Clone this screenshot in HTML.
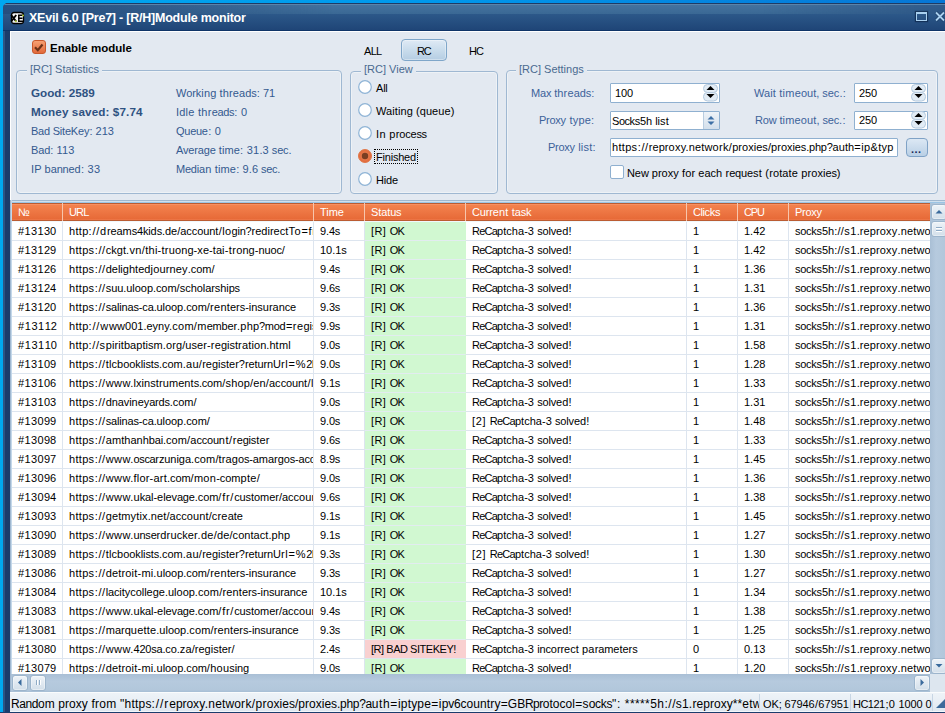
<!DOCTYPE html>
<html><head><meta charset="utf-8">
<style>
*{margin:0;padding:0;box-sizing:border-box}
html,body{width:945px;height:713px;overflow:hidden;background:linear-gradient(90deg,#00a8f0 0,#0098ec 45%,#0676d6 100%);font-family:"Liberation Sans",sans-serif;font-size:11px;color:#000}
.abs{position:absolute}
.t b,.c b,.h b,.inp b{font-weight:inherit}
#win{position:absolute;left:3px;top:3px;width:960px;height:720px;background:#1c3c6c;border-radius:5px 5px 0 0;overflow:hidden}
#titlebar{position:absolute;left:0;top:0;width:100%;height:28px;background:linear-gradient(#1e3c66 0,#1e3c66 1px,#5a84ab 1px,#5a84ab 2px,#44729e 2px,#3a6894 11px,#2c5889 11px,#1f4577 27px,#0f3468 27px)}
#lframe{position:absolute;left:0;top:28px;width:7px;height:700px;background:linear-gradient(90deg,#2c5484 0,#2c5484 2px,#1b3b6b 2px)}
#title{position:absolute;left:26px;top:7.5px;font-weight:bold;font-size:12.5px;letter-spacing:-0.22px;color:#fff;white-space:nowrap}
#content{position:absolute;left:10px;top:31px;width:940px;height:690px;background:#e3e9f1;border-left:1px solid #fff;border-top:1px solid #fff}
.grp{position:absolute;border:1px solid #9fb8d2;border-radius:4px;box-shadow:inset 0 0 0 1px rgba(255,255,255,.4)}
.legend{position:absolute;background:#e3e9f1;color:#4a6a90;padding:0 3px;white-space:nowrap;font-size:11px;line-height:13px}
.t{position:absolute;white-space:nowrap;line-height:13px}
.stat{color:#34598f}
.statb{color:#2f5282;font-weight:bold;font-size:11.7px}
.lbl{color:#3c629a}
.inp{position:absolute;background:#fff;border:1px solid #8fb0d0;border-radius:1px;overflow:hidden}
.inp span{position:absolute;left:4px;top:3px;white-space:nowrap;line-height:13px;color:#000}
#table{position:absolute;left:10px;top:200px;width:935px;height:492px;background:linear-gradient(#a0b8d0 0,#a0b8d0 1px,#d0e0ee 1px,#d0e0ee 2px,#9cc4e4 2px,#9cc4e4 3px,#f0f8fc 3px);border-left:1px solid #a0b8d0;box-shadow:inset 1px 0 0 #c4d8ea;overflow:hidden}
.h{position:absolute;top:203px;height:18px;background:linear-gradient(#bb5c32 0,#bb5c32 1px,#f99062 1px,#f99062 2px,#f3824e 2px,#e76a38 16px,#ec7444 16px,#ec7444 17px,#bb5c32 17px);border-right:1px solid #f7c6ad;color:#fff;overflow:hidden}
.h span{position:absolute;left:6px;top:3px;white-space:nowrap;line-height:13px}
.row{position:absolute;left:0;width:945px;height:19px}
.c{position:absolute;top:0;height:19px;border-right:1px solid #dde5ef;border-bottom:1px solid #dde5ef;overflow:hidden;background:#fff}
.c span{position:absolute;left:6px;top:3px;white-space:nowrap;line-height:13px}
.c.ok{background:#d1f8d1;border-bottom-color:#e2ecf0;border-right-color:#d1f8d1}
.c.bad{background:#f9d0d0;border-right-color:#f9d0d0}
.sbtn{position:absolute;border:1px solid #9db5cc;border-radius:3px;background:linear-gradient(#eef3f8,#d3dfea);box-shadow:inset 0 0 0 1px rgba(255,255,255,.4)}
</style></head><body>
<div id="win">
  <div id="titlebar"></div><div style="position:absolute;left:0;top:0;width:100%;height:28px;background:linear-gradient(90deg,rgba(31,69,119,.75) 0,rgba(31,69,119,.55) 120px,rgba(31,69,119,0) 330px,rgba(31,69,119,0) 760px,rgba(31,69,119,.5) 942px);-webkit-mask:linear-gradient(#000 0,#000 11px,transparent 11px);mask:linear-gradient(transparent 0,transparent 2px,#000 2px,#000 11px,transparent 11px)"></div>
  <div id="lframe"></div>
  <div id="title">XEvil 6.0 [Pre7] - [R/H]Module monitor</div>
</div>
<svg class="abs" style="left:10px;top:11px" width="15" height="14"><rect x="1.5" y="1.5" width="12" height="11" rx="2.5" fill="#f4f4f4" stroke="#000" stroke-width="1.3"></rect><path d="M1.2 4 L6.2 10.5 M6.2 4 L1.2 10.5" stroke="#000" stroke-width="1.9"></path><path d="M8 4.2 H13 M8 7.3 H12.5 M8 10.3 H13 M8.8 4.2 V10.3" stroke="#000" stroke-width="1.5"></path><circle cx="5.8" cy="10.2" r="0.9" fill="#bcdc3c"></circle><circle cx="13" cy="4.5" r="0.9" fill="#bcdc3c"></circle></svg>
<div class="abs" style="left:916px;top:12px;width:11px;height:9px;border:1px solid #a9d0ef;border-top-width:2px;box-shadow:0 0 1px 1px rgba(0,20,50,.5)"></div>
<svg class="abs" style="left:933px;top:10px" width="14" height="13"><path d="M3 2.5 L11 10.5 M11 2.5 L3 10.5" stroke="#0a2244" stroke-width="3.2" opacity=".5"></path><path d="M3 2.5 L11 10.5 M11 2.5 L3 10.5" stroke="#a9d0ef" stroke-width="1.8"></path></svg>

<div id="content"></div>

<!-- Enable module -->
<div class="abs" style="left:32px;top:40px;width:14px;height:14px;border-radius:3px;background:linear-gradient(#f7a173,#e2693a);border:1px solid #c9592c"></div>
<svg class="abs" style="left:32px;top:40px" width="14" height="14"><path d="M3 7.2 L5.8 10.2 L10.5 4.5" stroke="#6b3218" stroke-width="2.2" fill="none"></path></svg>
<div class="t" style="left:50px;top:42px;font-weight:bold;font-size:11.5px">Enable module</div>

<!-- Statistics group -->
<div class="grp" style="left:16px;top:70px;width:326px;height:124px"></div>
<div class="legend" style="left:27px;top:63px">[RC] Statistics</div>
<div class="t statb" style="left:31px;top:86px">Good: 2589</div>
<div class="t statb" style="left:31px;top:105px;letter-spacing:0.1px">Money saved: $7.74</div>
<div class="t stat" style="left:31px;top:125px"><b style="letter-spacing: -0.22px;">Bad </b><b style="letter-spacing: -0.22px;">Site</b><b style="letter-spacing: -0.1px;">Key:</b><b style="letter-spacing: 0.01px;"> 213</b></div>
<div class="t stat" style="left:31px;top:144px"><b style="letter-spacing: -0.1px;">Bad:</b><b style="letter-spacing: 0.22px;"> 113</b></div>
<div class="t stat" style="left:31px;top:163px"><b style="letter-spacing: 0.08px;">IP b</b><b style="letter-spacing: -0.16px;">anne</b><b style="letter-spacing: 0.27px;">d: 3</b><b style="letter-spacing: -0.12px;">3</b></div>
<div class="t stat" style="left:176px;top:87px"><b style="letter-spacing: -0.03px;">Work</b><b style="letter-spacing: 0.11px;">ing </b><b style="letter-spacing: 0.15px;">thre</b><b style="letter-spacing: -0.03px;">ads:</b><b style="letter-spacing: 0.05px;"> 71</b></div>
<div class="t stat" style="left:176px;top:106px"><b style="letter-spacing: 0.19px;">Idle</b><b style="letter-spacing: 0.33px;"> thr</b><b style="letter-spacing: -0.33px;">eads</b><b style="letter-spacing: 0.37px;">: 0</b></div>
<div class="t stat" style="left:176px;top:125px"><b style="letter-spacing: -0.27px;">Queu</b><b style="letter-spacing: 0.19px;">e: 0</b></div>
<div class="t stat" style="left:176px;top:144px"><b style="letter-spacing: -0.16px;">Aver</b><b style="letter-spacing: -0.09px;">age </b><b style="letter-spacing: 0.11px;">time</b><b style="letter-spacing: 0.25px;">: 31</b><b style="letter-spacing: -0.01px;">.3 s</b><b style="letter-spacing: -0.17px;">ec.</b></div>
<div class="t stat" style="left:176px;top:163px"><b style="letter-spacing: -0.24px;">Medi</b><b style="letter-spacing: 0.17px;">an t</b><b style="letter-spacing: 0.16px;">ime:</b><b style="letter-spacing: 0.11px;"> 9.6</b><b style="letter-spacing: -0.25px;"> sec</b><b style="letter-spacing: 0.27px;">.</b></div>

<!-- Tabs -->
<div class="t" style="left:364px;top:45px"><b style="letter-spacing: -0.69px;">ALL</b></div>
<div class="abs" style="left:401px;top:39px;width:46px;height:22px;border:1px solid #7fa6c9;border-radius:4px;background:linear-gradient(#dfeaf5,#c9dcec 50%,#b5cde3);box-shadow:inset 0 0 0 1px rgba(255,255,255,.35)"></div>
<div class="t" style="left:417px;top:45px"><b style="letter-spacing: -1.22px;">RC</b></div>
<div class="t" style="left:469px;top:45px"><b style="letter-spacing: -0.93px;">HC</b></div>

<!-- View group -->
<div class="grp" style="left:350px;top:71px;width:148px;height:123px"></div>
<div class="legend" style="left:361px;top:63px">[RC] View</div>
<svg class="abs" style="left:358px;top:80px" width="14" height="14"><circle cx="7" cy="7" r="6.3" fill="#fff" stroke="#8fb4d6" stroke-width="1.2"></circle></svg><div class="t" style="left:376px;top:82px"><b style="letter-spacing: -0.21px;">All</b></div><svg class="abs" style="left:358px;top:103px" width="14" height="14"><circle cx="7" cy="7" r="6.3" fill="#fff" stroke="#8fb4d6" stroke-width="1.2"></circle></svg><div class="t" style="left:376px;top:105px"><b style="letter-spacing: 0.07px;">Wait</b><b style="letter-spacing: 0.11px;">ing </b><b style="letter-spacing: 0.05px;">(que</b><b style="letter-spacing: 0.08px;">ue)</b></div><svg class="abs" style="left:358px;top:126px" width="14" height="14"><circle cx="7" cy="7" r="6.3" fill="#fff" stroke="#8fb4d6" stroke-width="1.2"></circle></svg><div class="t" style="left:376px;top:128px"><b style="letter-spacing: 0.35px;">In p</b><b style="letter-spacing: -0.15px;">roce</b><b style="letter-spacing: -0.59px;">ss</b></div><svg class="abs" style="left:358px;top:149px" width="14" height="14"><defs><radialGradient id="rg"><stop offset="0" stop-color="#f08a60"></stop><stop offset="1" stop-color="#e06838"></stop></radialGradient></defs><circle cx="7" cy="7" r="6.5" fill="url(#rg)" stroke="#e0784a"></circle><circle cx="7" cy="7" r="3.2" fill="#7a3e22"></circle></svg><div class="abs" style="left:374px;top:149px;width:44px;height:15px;border:1px dotted #000"></div><div class="t" style="left:376px;top:151px"><b style="letter-spacing: -0.21px;">Fini</b><b style="letter-spacing: -0.24px;">shed</b></div><svg class="abs" style="left:358px;top:172px" width="14" height="14"><circle cx="7" cy="7" r="6.3" fill="#fff" stroke="#8fb4d6" stroke-width="1.2"></circle></svg><div class="t" style="left:376px;top:174px"><b style="letter-spacing: -0.2px;">Hide</b></div>

<!-- Settings group -->
<div class="grp" style="left:506px;top:70px;width:432px;height:124px"></div>
<div class="legend" style="left:516px;top:63px">[RC] Settings</div>
<div class="t lbl" style="left:531px;top:87px"><b style="letter-spacing: -0.18px;">Max </b><b style="letter-spacing: 0.15px;">thre</b><b style="letter-spacing: -0.03px;">ads:</b></div>
<div class="t lbl" style="left:539px;top:114px"><b style="letter-spacing: -0.3px;">Prox</b><b style="letter-spacing: 0.24px;">y ty</b><b style="letter-spacing: 0.16px;">pe:</b></div>
<div class="t lbl" style="left:548px;top:141px"><b style="letter-spacing: -0.3px;">Prox</b><b style="letter-spacing: 0.13px;">y li</b><b style="letter-spacing: 0.28px;">st:</b></div>
<div class="t lbl" style="left:754px;top:87px"><b style="letter-spacing: 0.07px;">Wait</b><b style="letter-spacing: 0.28px;"> tim</b><b style="letter-spacing: 0.04px;">eout</b><b style="letter-spacing: -0.07px;">, se</b><b style="letter-spacing: 0.22px;">c.:</b></div>
<div class="t lbl" style="left:755px;top:114px"><b style="letter-spacing: -0.16px;">Row </b><b style="letter-spacing: 0.11px;">time</b><b style="letter-spacing: 0.19px;">out,</b><b style="letter-spacing: -0.25px;"> sec</b><b style="letter-spacing: 0.55px;">.:</b></div>
<div class="inp" style="left:610px;top:83px;width:110px;height:20px"><span><b style="letter-spacing: -0.11px;">100</b></span></div>
<div class="inp" style="left:610px;top:111px;width:110px;height:19px"><span style="left:1px"><b style="letter-spacing: -0.45px;">Sock</b><b style="letter-spacing: -0.08px;">s5h </b><b style="letter-spacing: 0.04px;">list</b></span></div>
<div class="inp" style="left:610px;top:138px;width:288px;height:19px"><span style="left:1px;top:2px"><b style="letter-spacing: 0.3px;">http</b><b style="letter-spacing: 0.63px;">s://</b><b style="letter-spacing: 0.06px;">repr</b><b style="letter-spacing: 0.22px;">oxy.</b><b style="letter-spacing: 0.13px;">netw</b><b style="letter-spacing: 0.32px;">ork/</b><b style="letter-spacing: 0.01px;">prox</b><b style="letter-spacing: 0.07px;">ies/</b><b style="letter-spacing: 0.01px;">prox</b><b style="letter-spacing: -0.15px;">ies.</b><b style="letter-spacing: -0.24px;">php?</b><b style="letter-spacing: 0.08px;">auth</b><b style="letter-spacing: 0.42px;">=ip&amp;</b><b style="letter-spacing: 0.18px;">typ</b></span></div>
<div class="inp" style="left:854px;top:83px;width:74px;height:20px"><span><b style="letter-spacing: -0.11px;">250</b></span></div>
<div class="inp" style="left:854px;top:111px;width:74px;height:19px"><span style="top:2px"><b style="letter-spacing: -0.11px;">250</b></span></div>

<svg class="abs" style="left:703px;top:84px" width="16" height="18"><rect x="0.5" y="0.5" width="14" height="8" rx="4" fill="#e2ecf5" stroke="#b5cade"></rect><rect x="0.5" y="8.5" width="14" height="8.5" rx="4" fill="#e2ecf5" stroke="#b5cade"></rect><path d="M3.5 6 L7.5 2 L11.5 6 Z M3.5 10 L7.5 14 L11.5 10 Z" fill="#000"></path></svg>
<svg class="abs" style="left:911px;top:84px" width="16" height="18"><rect x="0.5" y="0.5" width="14" height="8" rx="4" fill="#e2ecf5" stroke="#b5cade"></rect><rect x="0.5" y="8.5" width="14" height="8.5" rx="4" fill="#e2ecf5" stroke="#b5cade"></rect><path d="M3.5 6 L7.5 2 L11.5 6 Z M3.5 10 L7.5 14 L11.5 10 Z" fill="#000"></path></svg>
<svg class="abs" style="left:911px;top:111px" width="16" height="18"><rect x="0.5" y="0.5" width="14" height="8" rx="4" fill="#e2ecf5" stroke="#b5cade"></rect><rect x="0.5" y="8.5" width="14" height="8.5" rx="4" fill="#e2ecf5" stroke="#b5cade"></rect><path d="M3.5 6 L7.5 2 L11.5 6 Z M3.5 10 L7.5 14 L11.5 10 Z" fill="#000"></path></svg>
<div class="abs" style="left:703px;top:112px;width:16px;height:17px;background:linear-gradient(#eef3f8,#d3dfeb);border-left:1px solid #b9cde0"></div>
<svg class="abs" style="left:703px;top:112px" width="16" height="17"><path d="M4.5 7.5 L8 4 L11.5 7.5 Z M4.5 9.5 L8 13 L11.5 9.5 Z" fill="#3d6fa5"></path></svg>
<div class="abs" style="left:906px;top:138px;width:22px;height:19px;border:1px solid #7fa2c6;border-radius:4px;background:linear-gradient(#dce8f4,#b9cfe5)"></div>
<div class="t" style="left:911px;top:143px;font-weight:bold;color:#1a2a5a;letter-spacing:0.5px">...</div>
<div class="abs" style="left:610px;top:165px;width:14px;height:14px;border:1px solid #8fb0d0;border-radius:2px;background:#fff"></div>
<div class="t" style="left:627px;top:167px"><b style="letter-spacing: -0.08px;">New </b><b style="letter-spacing: 0.01px;">prox</b><b style="letter-spacing: 0.16px;">y fo</b><b style="letter-spacing: 0px;">r ea</b><b style="letter-spacing: 0.07px;">ch r</b><b style="letter-spacing: -0.17px;">eque</b><b style="letter-spacing: 0.24px;">st (</b><b style="letter-spacing: 0.1px;">rota</b><b style="letter-spacing: 0.16px;">te p</b><b style="letter-spacing: 0.04px;">roxi</b><b style="letter-spacing: -0.13px;">es)</b></div>

<!-- Table -->
<div id="table"></div>
<div class="h" style="left:12px;width:51px"><span><b style="letter-spacing: -5.76px;">№</b></span></div><div class="h" style="left:63px;width:251px"><span><b style="letter-spacing: -0.83px;">URL</b></span></div><div class="h" style="left:314px;width:51px"><span><b style="letter-spacing: -0.02px;">Time</b></span></div><div class="h" style="left:365px;width:101px"><span><b style="letter-spacing: -0.08px;">Stat</b><b style="letter-spacing: -0.29px;">us</b></span></div><div class="h" style="left:466px;width:221px"><span><b style="letter-spacing: -0.18px;">Curr</b><b style="letter-spacing: 0.17px;">ent </b><b style="letter-spacing: -0.09px;">task</b></span></div><div class="h" style="left:687px;width:51px"><span><b style="letter-spacing: -0.41px;">Clic</b><b style="letter-spacing: -0.31px;">ks</b></span></div><div class="h" style="left:738px;width:51px"><span><b style="letter-spacing: -1.12px;">CPU</b></span></div><div class="h" style="left:789px;width:142px"><span><b style="letter-spacing: -0.3px;">Prox</b><b style="letter-spacing: -0.02px;">y</b></span></div>
<div class="row" style="top:222px"><div class="c" style="left:12px;width:51px"><span><b style="letter-spacing: 0.39px;">#131</b><b style="letter-spacing: -0.12px;">30</b></span></div><div class="c" style="left:63px;width:251px"><span><b style="letter-spacing: 0.3px;">http</b><b style="letter-spacing: 0.77px;">://d</b><b style="letter-spacing: -0.08px;">ream</b><b style="letter-spacing: -0.16px;">s4ki</b><b style="letter-spacing: -0.1px;">ds.d</b><b style="letter-spacing: 0.01px;">e/ac</b><b style="letter-spacing: -0.13px;">coun</b><b style="letter-spacing: 0.42px;">t/lo</b><b style="letter-spacing: -0.21px;">gin?</b><b style="letter-spacing: 0px;">redi</b><b style="letter-spacing: 0.04px;">rect</b><b style="letter-spacing: 0.7px;">To=f</b><b style="letter-spacing: 0.07px;">rom</b></span></div><div class="c" style="left:314px;width:51px"><span><b style="letter-spacing: -0.14px;">9.4s</b></span></div><div class="c ok" style="left:365px;width:101px"><span><b style="letter-spacing: 0.39px;">[R] </b><b style="letter-spacing: -0.83px;">OK</b></span></div><div class="c" style="left:466px;width:221px"><span><b style="letter-spacing: -0.78px;">ReCa</b><b style="letter-spacing: 0.04px;">ptch</b><b style="letter-spacing: 0.06px;">a-3 </b><b style="letter-spacing: -0.17px;">solv</b><b style="letter-spacing: 0.07px;">ed!</b></span></div><div class="c" style="left:687px;width:51px"><span><b style="letter-spacing: -0.12px;">1</b></span></div><div class="c" style="left:738px;width:51px"><span><b style="letter-spacing: -0.02px;">1.42</b></span></div><div class="c" style="left:789px;width:142px"><span><b style="letter-spacing: -0.3px;">sock</b><b style="letter-spacing: 0.04px;">s5h:</b><b style="letter-spacing: 0.4px;">//s1</b><b style="letter-spacing: 0.05px;">.rep</b><b style="letter-spacing: 0.22px;">roxy</b><b style="letter-spacing: 0.14px;">.net</b><b style="letter-spacing: 0.08px;">work</b><b style="letter-spacing: 0.12px;">:100</b><b style="letter-spacing: -0.12px;">00</b></span></div></div>
<div class="row" style="top:241px"><div class="c" style="left:12px;width:51px"><span><b style="letter-spacing: 0.39px;">#131</b><b style="letter-spacing: -0.12px;">29</b></span></div><div class="c" style="left:63px;width:251px"><span><b style="letter-spacing: 0.3px;">http</b><b style="letter-spacing: 0.63px;">s://</b><b style="letter-spacing: 0.03px;">ckgt</b><b style="letter-spacing: 0.35px;">.vn/</b><b style="letter-spacing: 0.26px;">thi-</b><b style="letter-spacing: 0.19px;">truo</b><b style="letter-spacing: 0.06px;">ng-x</b><b style="letter-spacing: 0.06px;">e-ta</b><b style="letter-spacing: 0.33px;">i-tr</b><b style="letter-spacing: 0.04px;">ong-</b><b style="letter-spacing: -0.13px;">nuoc</b><b style="letter-spacing: 1.14px;">/</b></span></div><div class="c" style="left:314px;width:51px"><span><b style="letter-spacing: -0.02px;">10.1</b><b style="letter-spacing: -0.59px;">s</b></span></div><div class="c ok" style="left:365px;width:101px"><span><b style="letter-spacing: 0.39px;">[R] </b><b style="letter-spacing: -0.83px;">OK</b></span></div><div class="c" style="left:466px;width:221px"><span><b style="letter-spacing: -0.78px;">ReCa</b><b style="letter-spacing: 0.04px;">ptch</b><b style="letter-spacing: 0.06px;">a-3 </b><b style="letter-spacing: -0.17px;">solv</b><b style="letter-spacing: 0.07px;">ed!</b></span></div><div class="c" style="left:687px;width:51px"><span><b style="letter-spacing: -0.12px;">1</b></span></div><div class="c" style="left:738px;width:51px"><span><b style="letter-spacing: -0.02px;">1.42</b></span></div><div class="c" style="left:789px;width:142px"><span><b style="letter-spacing: -0.3px;">sock</b><b style="letter-spacing: 0.04px;">s5h:</b><b style="letter-spacing: 0.4px;">//s1</b><b style="letter-spacing: 0.05px;">.rep</b><b style="letter-spacing: 0.22px;">roxy</b><b style="letter-spacing: 0.14px;">.net</b><b style="letter-spacing: 0.08px;">work</b><b style="letter-spacing: 0.12px;">:100</b><b style="letter-spacing: -0.12px;">00</b></span></div></div>
<div class="row" style="top:260px"><div class="c" style="left:12px;width:51px"><span><b style="letter-spacing: 0.39px;">#131</b><b style="letter-spacing: -0.12px;">26</b></span></div><div class="c" style="left:63px;width:251px"><span><b style="letter-spacing: 0.3px;">http</b><b style="letter-spacing: 0.63px;">s://</b><b style="letter-spacing: -0.05px;">deli</b><b style="letter-spacing: 0.06px;">ghte</b><b style="letter-spacing: 0.12px;">djou</b><b style="letter-spacing: 0.19px;">rney</b><b style="letter-spacing: -0.06px;">.com</b><b style="letter-spacing: 1.14px;">/</b></span></div><div class="c" style="left:314px;width:51px"><span><b style="letter-spacing: -0.14px;">9.4s</b></span></div><div class="c ok" style="left:365px;width:101px"><span><b style="letter-spacing: 0.39px;">[R] </b><b style="letter-spacing: -0.83px;">OK</b></span></div><div class="c" style="left:466px;width:221px"><span><b style="letter-spacing: -0.78px;">ReCa</b><b style="letter-spacing: 0.04px;">ptch</b><b style="letter-spacing: 0.06px;">a-3 </b><b style="letter-spacing: -0.17px;">solv</b><b style="letter-spacing: 0.07px;">ed!</b></span></div><div class="c" style="left:687px;width:51px"><span><b style="letter-spacing: -0.12px;">1</b></span></div><div class="c" style="left:738px;width:51px"><span><b style="letter-spacing: -0.02px;">1.36</b></span></div><div class="c" style="left:789px;width:142px"><span><b style="letter-spacing: -0.3px;">sock</b><b style="letter-spacing: 0.04px;">s5h:</b><b style="letter-spacing: 0.4px;">//s1</b><b style="letter-spacing: 0.05px;">.rep</b><b style="letter-spacing: 0.22px;">roxy</b><b style="letter-spacing: 0.14px;">.net</b><b style="letter-spacing: 0.08px;">work</b><b style="letter-spacing: 0.12px;">:100</b><b style="letter-spacing: -0.12px;">00</b></span></div></div>
<div class="row" style="top:279px"><div class="c" style="left:12px;width:51px"><span><b style="letter-spacing: 0.39px;">#131</b><b style="letter-spacing: -0.12px;">24</b></span></div><div class="c" style="left:63px;width:251px"><span><b style="letter-spacing: 0.3px;">http</b><b style="letter-spacing: 0.63px;">s://</b><b style="letter-spacing: -0.07px;">suu.</b><b style="letter-spacing: -0.05px;">uloo</b><b style="letter-spacing: -0.08px;">p.co</b><b style="letter-spacing: 0.05px;">m/sc</b><b style="letter-spacing: -0.1px;">hola</b><b style="letter-spacing: -0.05px;">rshi</b><b style="letter-spacing: -0.32px;">ps</b></span></div><div class="c" style="left:314px;width:51px"><span><b style="letter-spacing: -0.14px;">9.6s</b></span></div><div class="c ok" style="left:365px;width:101px"><span><b style="letter-spacing: 0.39px;">[R] </b><b style="letter-spacing: -0.83px;">OK</b></span></div><div class="c" style="left:466px;width:221px"><span><b style="letter-spacing: -0.78px;">ReCa</b><b style="letter-spacing: 0.04px;">ptch</b><b style="letter-spacing: 0.06px;">a-3 </b><b style="letter-spacing: -0.17px;">solv</b><b style="letter-spacing: 0.07px;">ed!</b></span></div><div class="c" style="left:687px;width:51px"><span><b style="letter-spacing: -0.12px;">1</b></span></div><div class="c" style="left:738px;width:51px"><span><b style="letter-spacing: -0.02px;">1.31</b></span></div><div class="c" style="left:789px;width:142px"><span><b style="letter-spacing: -0.3px;">sock</b><b style="letter-spacing: 0.04px;">s5h:</b><b style="letter-spacing: 0.4px;">//s1</b><b style="letter-spacing: 0.05px;">.rep</b><b style="letter-spacing: 0.22px;">roxy</b><b style="letter-spacing: 0.14px;">.net</b><b style="letter-spacing: 0.08px;">work</b><b style="letter-spacing: 0.12px;">:100</b><b style="letter-spacing: -0.12px;">00</b></span></div></div>
<div class="row" style="top:298px"><div class="c" style="left:12px;width:51px"><span><b style="letter-spacing: 0.39px;">#131</b><b style="letter-spacing: -0.12px;">20</b></span></div><div class="c" style="left:63px;width:251px"><span><b style="letter-spacing: 0.3px;">http</b><b style="letter-spacing: 0.63px;">s://</b><b style="letter-spacing: -0.2px;">sali</b><b style="letter-spacing: -0.15px;">nas-</b><b style="letter-spacing: -0.12px;">ca.u</b><b style="letter-spacing: -0.06px;">loop</b><b style="letter-spacing: -0.06px;">.com</b><b style="letter-spacing: 0.28px;">/ren</b><b style="letter-spacing: 0px;">ters</b><b style="letter-spacing: -0.04px;">-ins</b><b style="letter-spacing: -0.01px;">uran</b><b style="letter-spacing: -0.38px;">ce</b></span></div><div class="c" style="left:314px;width:51px"><span><b style="letter-spacing: -0.14px;">9.3s</b></span></div><div class="c ok" style="left:365px;width:101px"><span><b style="letter-spacing: 0.39px;">[R] </b><b style="letter-spacing: -0.83px;">OK</b></span></div><div class="c" style="left:466px;width:221px"><span><b style="letter-spacing: -0.78px;">ReCa</b><b style="letter-spacing: 0.04px;">ptch</b><b style="letter-spacing: 0.06px;">a-3 </b><b style="letter-spacing: -0.17px;">solv</b><b style="letter-spacing: 0.07px;">ed!</b></span></div><div class="c" style="left:687px;width:51px"><span><b style="letter-spacing: -0.12px;">1</b></span></div><div class="c" style="left:738px;width:51px"><span><b style="letter-spacing: -0.02px;">1.36</b></span></div><div class="c" style="left:789px;width:142px"><span><b style="letter-spacing: -0.3px;">sock</b><b style="letter-spacing: 0.04px;">s5h:</b><b style="letter-spacing: 0.4px;">//s1</b><b style="letter-spacing: 0.05px;">.rep</b><b style="letter-spacing: 0.22px;">roxy</b><b style="letter-spacing: 0.14px;">.net</b><b style="letter-spacing: 0.08px;">work</b><b style="letter-spacing: 0.12px;">:100</b><b style="letter-spacing: -0.12px;">00</b></span></div></div>
<div class="row" style="top:317px"><div class="c" style="left:12px;width:51px"><span><b style="letter-spacing: 0.59px;">#131</b><b style="letter-spacing: -0.12px;">12</b></span></div><div class="c" style="left:63px;width:251px"><span><b style="letter-spacing: 0.3px;">http</b><b style="letter-spacing: 0.83px;">://w</b><b style="letter-spacing: 0.05px;">ww00</b><b style="letter-spacing: -0.05px;">1.ey</b><b style="letter-spacing: 0.17px;">ny.c</b><b style="letter-spacing: 0.29px;">om/m</b><b style="letter-spacing: -0.16px;">embe</b><b style="letter-spacing: 0.29px;">r.ph</b><b style="letter-spacing: -0.26px;">p?mo</b><b style="letter-spacing: 0.38px;">d=re</b><b style="letter-spacing: 0.01px;">gist</b><b style="letter-spacing: -0.02px;">er</b></span></div><div class="c" style="left:314px;width:51px"><span><b style="letter-spacing: -0.14px;">9.9s</b></span></div><div class="c ok" style="left:365px;width:101px"><span><b style="letter-spacing: 0.39px;">[R] </b><b style="letter-spacing: -0.83px;">OK</b></span></div><div class="c" style="left:466px;width:221px"><span><b style="letter-spacing: -0.78px;">ReCa</b><b style="letter-spacing: 0.04px;">ptch</b><b style="letter-spacing: 0.06px;">a-3 </b><b style="letter-spacing: -0.17px;">solv</b><b style="letter-spacing: 0.07px;">ed!</b></span></div><div class="c" style="left:687px;width:51px"><span><b style="letter-spacing: -0.12px;">1</b></span></div><div class="c" style="left:738px;width:51px"><span><b style="letter-spacing: -0.02px;">1.31</b></span></div><div class="c" style="left:789px;width:142px"><span><b style="letter-spacing: -0.3px;">sock</b><b style="letter-spacing: 0.04px;">s5h:</b><b style="letter-spacing: 0.4px;">//s1</b><b style="letter-spacing: 0.05px;">.rep</b><b style="letter-spacing: 0.22px;">roxy</b><b style="letter-spacing: 0.14px;">.net</b><b style="letter-spacing: 0.08px;">work</b><b style="letter-spacing: 0.12px;">:100</b><b style="letter-spacing: -0.12px;">00</b></span></div></div>
<div class="row" style="top:336px"><div class="c" style="left:12px;width:51px"><span><b style="letter-spacing: 0.59px;">#131</b><b style="letter-spacing: -0.12px;">10</b></span></div><div class="c" style="left:63px;width:251px"><span><b style="letter-spacing: 0.3px;">http</b><b style="letter-spacing: 0.63px;">://s</b><b style="letter-spacing: 0.1px;">piri</b><b style="letter-spacing: 0.05px;">tbap</b><b style="letter-spacing: 0.04px;">tism</b><b style="letter-spacing: 0.1px;">.org</b><b style="letter-spacing: 0.06px;">/use</b><b style="letter-spacing: 0.15px;">r-re</b><b style="letter-spacing: 0.01px;">gist</b><b style="letter-spacing: 0.16px;">rati</b><b style="letter-spacing: 0.04px;">on.h</b><b style="letter-spacing: 0.25px;">tml</b></span></div><div class="c" style="left:314px;width:51px"><span><b style="letter-spacing: -0.14px;">9.0s</b></span></div><div class="c ok" style="left:365px;width:101px"><span><b style="letter-spacing: 0.39px;">[R] </b><b style="letter-spacing: -0.83px;">OK</b></span></div><div class="c" style="left:466px;width:221px"><span><b style="letter-spacing: -0.78px;">ReCa</b><b style="letter-spacing: 0.04px;">ptch</b><b style="letter-spacing: 0.06px;">a-3 </b><b style="letter-spacing: -0.17px;">solv</b><b style="letter-spacing: 0.07px;">ed!</b></span></div><div class="c" style="left:687px;width:51px"><span><b style="letter-spacing: -0.12px;">1</b></span></div><div class="c" style="left:738px;width:51px"><span><b style="letter-spacing: -0.02px;">1.58</b></span></div><div class="c" style="left:789px;width:142px"><span><b style="letter-spacing: -0.3px;">sock</b><b style="letter-spacing: 0.04px;">s5h:</b><b style="letter-spacing: 0.4px;">//s1</b><b style="letter-spacing: 0.05px;">.rep</b><b style="letter-spacing: 0.22px;">roxy</b><b style="letter-spacing: 0.14px;">.net</b><b style="letter-spacing: 0.08px;">work</b><b style="letter-spacing: 0.12px;">:100</b><b style="letter-spacing: -0.12px;">00</b></span></div></div>
<div class="row" style="top:355px"><div class="c" style="left:12px;width:51px"><span><b style="letter-spacing: 0.39px;">#131</b><b style="letter-spacing: -0.12px;">09</b></span></div><div class="c" style="left:63px;width:251px"><span><b style="letter-spacing: 0.3px;">http</b><b style="letter-spacing: 0.63px;">s://</b><b style="letter-spacing: 0.06px;">tlcb</b><b style="letter-spacing: -0.06px;">ookl</b><b style="letter-spacing: -0.12px;">ists</b><b style="letter-spacing: -0.06px;">.com</b><b style="letter-spacing: 0.27px;">.au/</b><b style="letter-spacing: 0px;">regi</b><b style="letter-spacing: 0px;">ster</b><b style="letter-spacing: -0.08px;">?ret</b><b style="letter-spacing: -0.1px;">urnU</b><b style="letter-spacing: 0.73px;">rl=%</b><b style="letter-spacing: -0.47px;">2Fac</b><b style="letter-spacing: -0.13px;">coun</b><b style="letter-spacing: 0.61px;">t</b></span></div><div class="c" style="left:314px;width:51px"><span><b style="letter-spacing: -0.14px;">9.0s</b></span></div><div class="c ok" style="left:365px;width:101px"><span><b style="letter-spacing: 0.39px;">[R] </b><b style="letter-spacing: -0.83px;">OK</b></span></div><div class="c" style="left:466px;width:221px"><span><b style="letter-spacing: -0.78px;">ReCa</b><b style="letter-spacing: 0.04px;">ptch</b><b style="letter-spacing: 0.06px;">a-3 </b><b style="letter-spacing: -0.17px;">solv</b><b style="letter-spacing: 0.07px;">ed!</b></span></div><div class="c" style="left:687px;width:51px"><span><b style="letter-spacing: -0.12px;">1</b></span></div><div class="c" style="left:738px;width:51px"><span><b style="letter-spacing: -0.02px;">1.28</b></span></div><div class="c" style="left:789px;width:142px"><span><b style="letter-spacing: -0.3px;">sock</b><b style="letter-spacing: 0.04px;">s5h:</b><b style="letter-spacing: 0.4px;">//s1</b><b style="letter-spacing: 0.05px;">.rep</b><b style="letter-spacing: 0.22px;">roxy</b><b style="letter-spacing: 0.14px;">.net</b><b style="letter-spacing: 0.08px;">work</b><b style="letter-spacing: 0.12px;">:100</b><b style="letter-spacing: -0.12px;">00</b></span></div></div>
<div class="row" style="top:374px"><div class="c" style="left:12px;width:51px"><span><b style="letter-spacing: 0.39px;">#131</b><b style="letter-spacing: -0.12px;">06</b></span></div><div class="c" style="left:63px;width:251px"><span><b style="letter-spacing: 0.3px;">http</b><b style="letter-spacing: 0.63px;">s://</b><b style="letter-spacing: 0.38px;">www.</b><b style="letter-spacing: 0.03px;">lxin</b><b style="letter-spacing: 0.08px;">stru</b><b style="letter-spacing: 0.09px;">ment</b><b style="letter-spacing: -0.23px;">s.co</b><b style="letter-spacing: 0.16px;">m/sh</b><b style="letter-spacing: 0.16px;">op/e</b><b style="letter-spacing: 0.1px;">n/ac</b><b style="letter-spacing: -0.13px;">coun</b><b style="letter-spacing: 0.42px;">t/lo</b><b style="letter-spacing: 0.02px;">gin</b></span></div><div class="c" style="left:314px;width:51px"><span><b style="letter-spacing: -0.14px;">9.1s</b></span></div><div class="c ok" style="left:365px;width:101px"><span><b style="letter-spacing: 0.39px;">[R] </b><b style="letter-spacing: -0.83px;">OK</b></span></div><div class="c" style="left:466px;width:221px"><span><b style="letter-spacing: -0.78px;">ReCa</b><b style="letter-spacing: 0.04px;">ptch</b><b style="letter-spacing: 0.06px;">a-3 </b><b style="letter-spacing: -0.17px;">solv</b><b style="letter-spacing: 0.07px;">ed!</b></span></div><div class="c" style="left:687px;width:51px"><span><b style="letter-spacing: -0.12px;">1</b></span></div><div class="c" style="left:738px;width:51px"><span><b style="letter-spacing: -0.02px;">1.33</b></span></div><div class="c" style="left:789px;width:142px"><span><b style="letter-spacing: -0.3px;">sock</b><b style="letter-spacing: 0.04px;">s5h:</b><b style="letter-spacing: 0.4px;">//s1</b><b style="letter-spacing: 0.05px;">.rep</b><b style="letter-spacing: 0.22px;">roxy</b><b style="letter-spacing: 0.14px;">.net</b><b style="letter-spacing: 0.08px;">work</b><b style="letter-spacing: 0.12px;">:100</b><b style="letter-spacing: -0.12px;">00</b></span></div></div>
<div class="row" style="top:393px"><div class="c" style="left:12px;width:51px"><span><b style="letter-spacing: 0.39px;">#131</b><b style="letter-spacing: -0.12px;">03</b></span></div><div class="c" style="left:63px;width:251px"><span><b style="letter-spacing: 0.3px;">http</b><b style="letter-spacing: 0.63px;">s://</b><b style="letter-spacing: -0.1px;">dnav</b><b style="letter-spacing: -0.07px;">iney</b><b style="letter-spacing: -0.17px;">ards</b><b style="letter-spacing: -0.06px;">.com</b><b style="letter-spacing: 1.14px;">/</b></span></div><div class="c" style="left:314px;width:51px"><span><b style="letter-spacing: -0.14px;">9.0s</b></span></div><div class="c ok" style="left:365px;width:101px"><span><b style="letter-spacing: 0.39px;">[R] </b><b style="letter-spacing: -0.83px;">OK</b></span></div><div class="c" style="left:466px;width:221px"><span><b style="letter-spacing: -0.78px;">ReCa</b><b style="letter-spacing: 0.04px;">ptch</b><b style="letter-spacing: 0.06px;">a-3 </b><b style="letter-spacing: -0.17px;">solv</b><b style="letter-spacing: 0.07px;">ed!</b></span></div><div class="c" style="left:687px;width:51px"><span><b style="letter-spacing: -0.12px;">1</b></span></div><div class="c" style="left:738px;width:51px"><span><b style="letter-spacing: -0.02px;">1.31</b></span></div><div class="c" style="left:789px;width:142px"><span><b style="letter-spacing: -0.3px;">sock</b><b style="letter-spacing: 0.04px;">s5h:</b><b style="letter-spacing: 0.4px;">//s1</b><b style="letter-spacing: 0.05px;">.rep</b><b style="letter-spacing: 0.22px;">roxy</b><b style="letter-spacing: 0.14px;">.net</b><b style="letter-spacing: 0.08px;">work</b><b style="letter-spacing: 0.12px;">:100</b><b style="letter-spacing: -0.12px;">00</b></span></div></div>
<div class="row" style="top:412px"><div class="c" style="left:12px;width:51px"><span><b style="letter-spacing: 0.39px;">#130</b><b style="letter-spacing: -0.12px;">99</b></span></div><div class="c" style="left:63px;width:251px"><span><b style="letter-spacing: 0.3px;">http</b><b style="letter-spacing: 0.63px;">s://</b><b style="letter-spacing: -0.2px;">sali</b><b style="letter-spacing: -0.15px;">nas-</b><b style="letter-spacing: -0.12px;">ca.u</b><b style="letter-spacing: -0.06px;">loop</b><b style="letter-spacing: -0.06px;">.com</b><b style="letter-spacing: 1.14px;">/</b></span></div><div class="c" style="left:314px;width:51px"><span><b style="letter-spacing: -0.14px;">9.0s</b></span></div><div class="c ok" style="left:365px;width:101px"><span><b style="letter-spacing: 0.39px;">[R] </b><b style="letter-spacing: -0.83px;">OK</b></span></div><div class="c" style="left:466px;width:221px"><span><b style="letter-spacing: 0.64px;">[2] </b><b style="letter-spacing: -0.78px;">ReCa</b><b style="letter-spacing: 0.04px;">ptch</b><b style="letter-spacing: 0.06px;">a-3 </b><b style="letter-spacing: -0.17px;">solv</b><b style="letter-spacing: 0.07px;">ed!</b></span></div><div class="c" style="left:687px;width:51px"><span><b style="letter-spacing: -0.12px;">1</b></span></div><div class="c" style="left:738px;width:51px"><span><b style="letter-spacing: -0.02px;">1.48</b></span></div><div class="c" style="left:789px;width:142px"><span><b style="letter-spacing: -0.3px;">sock</b><b style="letter-spacing: 0.04px;">s5h:</b><b style="letter-spacing: 0.4px;">//s1</b><b style="letter-spacing: 0.05px;">.rep</b><b style="letter-spacing: 0.22px;">roxy</b><b style="letter-spacing: 0.14px;">.net</b><b style="letter-spacing: 0.08px;">work</b><b style="letter-spacing: 0.12px;">:100</b><b style="letter-spacing: -0.12px;">00</b></span></div></div>
<div class="row" style="top:431px"><div class="c" style="left:12px;width:51px"><span><b style="letter-spacing: 0.39px;">#130</b><b style="letter-spacing: -0.12px;">98</b></span></div><div class="c" style="left:63px;width:251px"><span><b style="letter-spacing: 0.3px;">http</b><b style="letter-spacing: 0.63px;">s://</b><b style="letter-spacing: 0.09px;">amth</b><b style="letter-spacing: -0.09px;">anhb</b><b style="letter-spacing: -0.11px;">ai.c</b><b style="letter-spacing: 0.18px;">om/a</b><b style="letter-spacing: -0.25px;">ccou</b><b style="letter-spacing: 0.52px;">nt/r</b><b style="letter-spacing: -0.22px;">egis</b><b style="letter-spacing: 0.19px;">ter</b></span></div><div class="c" style="left:314px;width:51px"><span><b style="letter-spacing: -0.14px;">9.6s</b></span></div><div class="c ok" style="left:365px;width:101px"><span><b style="letter-spacing: 0.39px;">[R] </b><b style="letter-spacing: -0.83px;">OK</b></span></div><div class="c" style="left:466px;width:221px"><span><b style="letter-spacing: -0.78px;">ReCa</b><b style="letter-spacing: 0.04px;">ptch</b><b style="letter-spacing: 0.06px;">a-3 </b><b style="letter-spacing: -0.17px;">solv</b><b style="letter-spacing: 0.07px;">ed!</b></span></div><div class="c" style="left:687px;width:51px"><span><b style="letter-spacing: -0.12px;">1</b></span></div><div class="c" style="left:738px;width:51px"><span><b style="letter-spacing: -0.02px;">1.33</b></span></div><div class="c" style="left:789px;width:142px"><span><b style="letter-spacing: -0.3px;">sock</b><b style="letter-spacing: 0.04px;">s5h:</b><b style="letter-spacing: 0.4px;">//s1</b><b style="letter-spacing: 0.05px;">.rep</b><b style="letter-spacing: 0.22px;">roxy</b><b style="letter-spacing: 0.14px;">.net</b><b style="letter-spacing: 0.08px;">work</b><b style="letter-spacing: 0.12px;">:100</b><b style="letter-spacing: -0.12px;">00</b></span></div></div>
<div class="row" style="top:450px"><div class="c" style="left:12px;width:51px"><span><b style="letter-spacing: 0.39px;">#130</b><b style="letter-spacing: -0.12px;">97</b></span></div><div class="c" style="left:63px;width:251px"><span><b style="letter-spacing: 0.3px;">http</b><b style="letter-spacing: 0.63px;">s://</b><b style="letter-spacing: 0.38px;">www.</b><b style="letter-spacing: -0.38px;">osca</b><b style="letter-spacing: -0.07px;">rzun</b><b style="letter-spacing: -0.01px;">iga.</b><b style="letter-spacing: 0.16px;">com/</b><b style="letter-spacing: 0.13px;">trag</b><b style="letter-spacing: -0.19px;">os-a</b><b style="letter-spacing: 0px;">marg</b><b style="letter-spacing: -0.19px;">os-a</b><b style="letter-spacing: -0.25px;">ccou</b><b style="letter-spacing: 0.31px;">nt</b></span></div><div class="c" style="left:314px;width:51px"><span><b style="letter-spacing: -0.14px;">8.9s</b></span></div><div class="c ok" style="left:365px;width:101px"><span><b style="letter-spacing: 0.39px;">[R] </b><b style="letter-spacing: -0.83px;">OK</b></span></div><div class="c" style="left:466px;width:221px"><span><b style="letter-spacing: -0.78px;">ReCa</b><b style="letter-spacing: 0.04px;">ptch</b><b style="letter-spacing: 0.06px;">a-3 </b><b style="letter-spacing: -0.17px;">solv</b><b style="letter-spacing: 0.07px;">ed!</b></span></div><div class="c" style="left:687px;width:51px"><span><b style="letter-spacing: -0.12px;">1</b></span></div><div class="c" style="left:738px;width:51px"><span><b style="letter-spacing: -0.02px;">1.45</b></span></div><div class="c" style="left:789px;width:142px"><span><b style="letter-spacing: -0.3px;">sock</b><b style="letter-spacing: 0.04px;">s5h:</b><b style="letter-spacing: 0.4px;">//s1</b><b style="letter-spacing: 0.05px;">.rep</b><b style="letter-spacing: 0.22px;">roxy</b><b style="letter-spacing: 0.14px;">.net</b><b style="letter-spacing: 0.08px;">work</b><b style="letter-spacing: 0.12px;">:100</b><b style="letter-spacing: -0.12px;">00</b></span></div></div>
<div class="row" style="top:469px"><div class="c" style="left:12px;width:51px"><span><b style="letter-spacing: 0.39px;">#130</b><b style="letter-spacing: -0.12px;">96</b></span></div><div class="c" style="left:63px;width:251px"><span><b style="letter-spacing: 0.3px;">http</b><b style="letter-spacing: 0.63px;">s://</b><b style="letter-spacing: 0.38px;">www.</b><b style="letter-spacing: 0.17px;">flor</b><b style="letter-spacing: 0.23px;">-art</b><b style="letter-spacing: -0.06px;">.com</b><b style="letter-spacing: 0.27px;">/mon</b><b style="letter-spacing: -0.04px;">-com</b><b style="letter-spacing: 0.35px;">pte/</b></span></div><div class="c" style="left:314px;width:51px"><span><b style="letter-spacing: -0.14px;">9.0s</b></span></div><div class="c ok" style="left:365px;width:101px"><span><b style="letter-spacing: 0.39px;">[R] </b><b style="letter-spacing: -0.83px;">OK</b></span></div><div class="c" style="left:466px;width:221px"><span><b style="letter-spacing: -0.78px;">ReCa</b><b style="letter-spacing: 0.04px;">ptch</b><b style="letter-spacing: 0.06px;">a-3 </b><b style="letter-spacing: -0.17px;">solv</b><b style="letter-spacing: 0.07px;">ed!</b></span></div><div class="c" style="left:687px;width:51px"><span><b style="letter-spacing: -0.12px;">1</b></span></div><div class="c" style="left:738px;width:51px"><span><b style="letter-spacing: -0.02px;">1.36</b></span></div><div class="c" style="left:789px;width:142px"><span><b style="letter-spacing: -0.3px;">sock</b><b style="letter-spacing: 0.04px;">s5h:</b><b style="letter-spacing: 0.4px;">//s1</b><b style="letter-spacing: 0.05px;">.rep</b><b style="letter-spacing: 0.22px;">roxy</b><b style="letter-spacing: 0.14px;">.net</b><b style="letter-spacing: 0.08px;">work</b><b style="letter-spacing: 0.12px;">:100</b><b style="letter-spacing: -0.12px;">00</b></span></div></div>
<div class="row" style="top:488px"><div class="c" style="left:12px;width:51px"><span><b style="letter-spacing: 0.39px;">#130</b><b style="letter-spacing: -0.12px;">94</b></span></div><div class="c" style="left:63px;width:251px"><span><b style="letter-spacing: 0.3px;">http</b><b style="letter-spacing: 0.63px;">s://</b><b style="letter-spacing: 0.38px;">www.</b><b style="letter-spacing: -0.07px;">ukal</b><b style="letter-spacing: -0.06px;">-ele</b><b style="letter-spacing: -0.18px;">vage</b><b style="letter-spacing: -0.06px;">.com</b><b style="letter-spacing: 0.75px;">/fr/</b><b style="letter-spacing: -0.1px;">cust</b><b style="letter-spacing: -0.03px;">omer</b><b style="letter-spacing: -0.02px;">/acc</b><b style="letter-spacing: 0.13px;">ount</b></span></div><div class="c" style="left:314px;width:51px"><span><b style="letter-spacing: -0.14px;">9.6s</b></span></div><div class="c ok" style="left:365px;width:101px"><span><b style="letter-spacing: 0.39px;">[R] </b><b style="letter-spacing: -0.83px;">OK</b></span></div><div class="c" style="left:466px;width:221px"><span><b style="letter-spacing: -0.78px;">ReCa</b><b style="letter-spacing: 0.04px;">ptch</b><b style="letter-spacing: 0.06px;">a-3 </b><b style="letter-spacing: -0.17px;">solv</b><b style="letter-spacing: 0.07px;">ed!</b></span></div><div class="c" style="left:687px;width:51px"><span><b style="letter-spacing: -0.12px;">1</b></span></div><div class="c" style="left:738px;width:51px"><span><b style="letter-spacing: -0.02px;">1.38</b></span></div><div class="c" style="left:789px;width:142px"><span><b style="letter-spacing: -0.3px;">sock</b><b style="letter-spacing: 0.04px;">s5h:</b><b style="letter-spacing: 0.4px;">//s1</b><b style="letter-spacing: 0.05px;">.rep</b><b style="letter-spacing: 0.22px;">roxy</b><b style="letter-spacing: 0.14px;">.net</b><b style="letter-spacing: 0.08px;">work</b><b style="letter-spacing: 0.12px;">:100</b><b style="letter-spacing: -0.12px;">00</b></span></div></div>
<div class="row" style="top:507px"><div class="c" style="left:12px;width:51px"><span><b style="letter-spacing: 0.39px;">#130</b><b style="letter-spacing: -0.12px;">93</b></span></div><div class="c" style="left:63px;width:251px"><span><b style="letter-spacing: 0.3px;">http</b><b style="letter-spacing: 0.63px;">s://</b><b style="letter-spacing: 0.08px;">getm</b><b style="letter-spacing: 0.15px;">ytix</b><b style="letter-spacing: 0.14px;">.net</b><b style="letter-spacing: -0.02px;">/acc</b><b style="letter-spacing: 0.13px;">ount</b><b style="letter-spacing: 0.17px;">/cre</b><b style="letter-spacing: -0.02px;">ate</b></span></div><div class="c" style="left:314px;width:51px"><span><b style="letter-spacing: -0.14px;">9.1s</b></span></div><div class="c ok" style="left:365px;width:101px"><span><b style="letter-spacing: 0.39px;">[R] </b><b style="letter-spacing: -0.83px;">OK</b></span></div><div class="c" style="left:466px;width:221px"><span><b style="letter-spacing: -0.78px;">ReCa</b><b style="letter-spacing: 0.04px;">ptch</b><b style="letter-spacing: 0.06px;">a-3 </b><b style="letter-spacing: -0.17px;">solv</b><b style="letter-spacing: 0.07px;">ed!</b></span></div><div class="c" style="left:687px;width:51px"><span><b style="letter-spacing: -0.12px;">1</b></span></div><div class="c" style="left:738px;width:51px"><span><b style="letter-spacing: -0.02px;">1.45</b></span></div><div class="c" style="left:789px;width:142px"><span><b style="letter-spacing: -0.3px;">sock</b><b style="letter-spacing: 0.04px;">s5h:</b><b style="letter-spacing: 0.4px;">//s1</b><b style="letter-spacing: 0.05px;">.rep</b><b style="letter-spacing: 0.22px;">roxy</b><b style="letter-spacing: 0.14px;">.net</b><b style="letter-spacing: 0.08px;">work</b><b style="letter-spacing: 0.12px;">:100</b><b style="letter-spacing: -0.12px;">00</b></span></div></div>
<div class="row" style="top:526px"><div class="c" style="left:12px;width:51px"><span><b style="letter-spacing: 0.39px;">#130</b><b style="letter-spacing: -0.12px;">90</b></span></div><div class="c" style="left:63px;width:251px"><span><b style="letter-spacing: 0.3px;">http</b><b style="letter-spacing: 0.63px;">s://</b><b style="letter-spacing: 0.38px;">www.</b><b style="letter-spacing: -0.22px;">unse</b><b style="letter-spacing: 0.14px;">rdru</b><b style="letter-spacing: 0.03px;">cker</b><b style="letter-spacing: 0.26px;">.de/</b><b style="letter-spacing: 0.09px;">de/c</b><b style="letter-spacing: 0.03px;">onta</b><b style="letter-spacing: 0.11px;">ct.p</b><b style="letter-spacing: -0.01px;">hp</b></span></div><div class="c" style="left:314px;width:51px"><span><b style="letter-spacing: -0.14px;">9.1s</b></span></div><div class="c ok" style="left:365px;width:101px"><span><b style="letter-spacing: 0.39px;">[R] </b><b style="letter-spacing: -0.83px;">OK</b></span></div><div class="c" style="left:466px;width:221px"><span><b style="letter-spacing: -0.78px;">ReCa</b><b style="letter-spacing: 0.04px;">ptch</b><b style="letter-spacing: 0.06px;">a-3 </b><b style="letter-spacing: -0.17px;">solv</b><b style="letter-spacing: 0.07px;">ed!</b></span></div><div class="c" style="left:687px;width:51px"><span><b style="letter-spacing: -0.12px;">1</b></span></div><div class="c" style="left:738px;width:51px"><span><b style="letter-spacing: -0.02px;">1.27</b></span></div><div class="c" style="left:789px;width:142px"><span><b style="letter-spacing: -0.3px;">sock</b><b style="letter-spacing: 0.04px;">s5h:</b><b style="letter-spacing: 0.4px;">//s1</b><b style="letter-spacing: 0.05px;">.rep</b><b style="letter-spacing: 0.22px;">roxy</b><b style="letter-spacing: 0.14px;">.net</b><b style="letter-spacing: 0.08px;">work</b><b style="letter-spacing: 0.12px;">:100</b><b style="letter-spacing: -0.12px;">00</b></span></div></div>
<div class="row" style="top:545px"><div class="c" style="left:12px;width:51px"><span><b style="letter-spacing: 0.39px;">#130</b><b style="letter-spacing: -0.12px;">89</b></span></div><div class="c" style="left:63px;width:251px"><span><b style="letter-spacing: 0.3px;">http</b><b style="letter-spacing: 0.63px;">s://</b><b style="letter-spacing: 0.06px;">tlcb</b><b style="letter-spacing: -0.06px;">ookl</b><b style="letter-spacing: -0.12px;">ists</b><b style="letter-spacing: -0.06px;">.com</b><b style="letter-spacing: 0.27px;">.au/</b><b style="letter-spacing: 0px;">regi</b><b style="letter-spacing: 0px;">ster</b><b style="letter-spacing: -0.08px;">?ret</b><b style="letter-spacing: -0.1px;">urnU</b><b style="letter-spacing: 0.73px;">rl=%</b><b style="letter-spacing: -0.47px;">2Fac</b><b style="letter-spacing: -0.13px;">coun</b><b style="letter-spacing: 0.61px;">t</b></span></div><div class="c" style="left:314px;width:51px"><span><b style="letter-spacing: -0.14px;">9.3s</b></span></div><div class="c ok" style="left:365px;width:101px"><span><b style="letter-spacing: 0.39px;">[R] </b><b style="letter-spacing: -0.83px;">OK</b></span></div><div class="c" style="left:466px;width:221px"><span><b style="letter-spacing: 0.64px;">[2] </b><b style="letter-spacing: -0.78px;">ReCa</b><b style="letter-spacing: 0.04px;">ptch</b><b style="letter-spacing: 0.06px;">a-3 </b><b style="letter-spacing: -0.17px;">solv</b><b style="letter-spacing: 0.07px;">ed!</b></span></div><div class="c" style="left:687px;width:51px"><span><b style="letter-spacing: -0.12px;">1</b></span></div><div class="c" style="left:738px;width:51px"><span><b style="letter-spacing: -0.02px;">1.30</b></span></div><div class="c" style="left:789px;width:142px"><span><b style="letter-spacing: -0.3px;">sock</b><b style="letter-spacing: 0.04px;">s5h:</b><b style="letter-spacing: 0.4px;">//s1</b><b style="letter-spacing: 0.05px;">.rep</b><b style="letter-spacing: 0.22px;">roxy</b><b style="letter-spacing: 0.14px;">.net</b><b style="letter-spacing: 0.08px;">work</b><b style="letter-spacing: 0.12px;">:100</b><b style="letter-spacing: -0.12px;">00</b></span></div></div>
<div class="row" style="top:564px"><div class="c" style="left:12px;width:51px"><span><b style="letter-spacing: 0.39px;">#130</b><b style="letter-spacing: -0.12px;">86</b></span></div><div class="c" style="left:63px;width:251px"><span><b style="letter-spacing: 0.3px;">http</b><b style="letter-spacing: 0.63px;">s://</b><b style="letter-spacing: 0.13px;">detr</b><b style="letter-spacing: 0.22px;">oit-</b><b style="letter-spacing: 0.11px;">mi.u</b><b style="letter-spacing: -0.06px;">loop</b><b style="letter-spacing: -0.06px;">.com</b><b style="letter-spacing: 0.28px;">/ren</b><b style="letter-spacing: 0px;">ters</b><b style="letter-spacing: -0.04px;">-ins</b><b style="letter-spacing: -0.01px;">uran</b><b style="letter-spacing: -0.38px;">ce</b></span></div><div class="c" style="left:314px;width:51px"><span><b style="letter-spacing: -0.14px;">9.3s</b></span></div><div class="c ok" style="left:365px;width:101px"><span><b style="letter-spacing: 0.39px;">[R] </b><b style="letter-spacing: -0.83px;">OK</b></span></div><div class="c" style="left:466px;width:221px"><span><b style="letter-spacing: -0.78px;">ReCa</b><b style="letter-spacing: 0.04px;">ptch</b><b style="letter-spacing: 0.06px;">a-3 </b><b style="letter-spacing: -0.17px;">solv</b><b style="letter-spacing: 0.07px;">ed!</b></span></div><div class="c" style="left:687px;width:51px"><span><b style="letter-spacing: -0.12px;">1</b></span></div><div class="c" style="left:738px;width:51px"><span><b style="letter-spacing: -0.02px;">1.27</b></span></div><div class="c" style="left:789px;width:142px"><span><b style="letter-spacing: -0.3px;">sock</b><b style="letter-spacing: 0.04px;">s5h:</b><b style="letter-spacing: 0.4px;">//s1</b><b style="letter-spacing: 0.05px;">.rep</b><b style="letter-spacing: 0.22px;">roxy</b><b style="letter-spacing: 0.14px;">.net</b><b style="letter-spacing: 0.08px;">work</b><b style="letter-spacing: 0.12px;">:100</b><b style="letter-spacing: -0.12px;">00</b></span></div></div>
<div class="row" style="top:583px"><div class="c" style="left:12px;width:51px"><span><b style="letter-spacing: 0.39px;">#130</b><b style="letter-spacing: -0.12px;">84</b></span></div><div class="c" style="left:63px;width:251px"><span><b style="letter-spacing: 0.3px;">http</b><b style="letter-spacing: 0.63px;">s://</b><b style="letter-spacing: -0.16px;">laci</b><b style="letter-spacing: 0px;">tyco</b><b style="letter-spacing: -0.05px;">lleg</b><b style="letter-spacing: 0.01px;">e.ul</b><b style="letter-spacing: -0.01px;">oop.</b><b style="letter-spacing: 0.16px;">com/</b><b style="letter-spacing: 0.15px;">rent</b><b style="letter-spacing: -0.08px;">ers-</b><b style="letter-spacing: -0.12px;">insu</b><b style="letter-spacing: -0.12px;">ranc</b><b style="letter-spacing: -0.34px;">e</b></span></div><div class="c" style="left:314px;width:51px"><span><b style="letter-spacing: -0.02px;">10.1</b><b style="letter-spacing: -0.59px;">s</b></span></div><div class="c ok" style="left:365px;width:101px"><span><b style="letter-spacing: 0.39px;">[R] </b><b style="letter-spacing: -0.83px;">OK</b></span></div><div class="c" style="left:466px;width:221px"><span><b style="letter-spacing: -0.78px;">ReCa</b><b style="letter-spacing: 0.04px;">ptch</b><b style="letter-spacing: 0.06px;">a-3 </b><b style="letter-spacing: -0.17px;">solv</b><b style="letter-spacing: 0.07px;">ed!</b></span></div><div class="c" style="left:687px;width:51px"><span><b style="letter-spacing: -0.12px;">1</b></span></div><div class="c" style="left:738px;width:51px"><span><b style="letter-spacing: -0.02px;">1.34</b></span></div><div class="c" style="left:789px;width:142px"><span><b style="letter-spacing: -0.3px;">sock</b><b style="letter-spacing: 0.04px;">s5h:</b><b style="letter-spacing: 0.4px;">//s1</b><b style="letter-spacing: 0.05px;">.rep</b><b style="letter-spacing: 0.22px;">roxy</b><b style="letter-spacing: 0.14px;">.net</b><b style="letter-spacing: 0.08px;">work</b><b style="letter-spacing: 0.12px;">:100</b><b style="letter-spacing: -0.12px;">00</b></span></div></div>
<div class="row" style="top:602px"><div class="c" style="left:12px;width:51px"><span><b style="letter-spacing: 0.39px;">#130</b><b style="letter-spacing: -0.12px;">83</b></span></div><div class="c" style="left:63px;width:251px"><span><b style="letter-spacing: 0.3px;">http</b><b style="letter-spacing: 0.63px;">s://</b><b style="letter-spacing: 0.38px;">www.</b><b style="letter-spacing: -0.07px;">ukal</b><b style="letter-spacing: -0.06px;">-ele</b><b style="letter-spacing: -0.18px;">vage</b><b style="letter-spacing: -0.06px;">.com</b><b style="letter-spacing: 0.75px;">/fr/</b><b style="letter-spacing: -0.1px;">cust</b><b style="letter-spacing: -0.03px;">omer</b><b style="letter-spacing: -0.02px;">/acc</b><b style="letter-spacing: 0.13px;">ount</b></span></div><div class="c" style="left:314px;width:51px"><span><b style="letter-spacing: -0.14px;">9.4s</b></span></div><div class="c ok" style="left:365px;width:101px"><span><b style="letter-spacing: 0.39px;">[R] </b><b style="letter-spacing: -0.83px;">OK</b></span></div><div class="c" style="left:466px;width:221px"><span><b style="letter-spacing: -0.78px;">ReCa</b><b style="letter-spacing: 0.04px;">ptch</b><b style="letter-spacing: 0.06px;">a-3 </b><b style="letter-spacing: -0.17px;">solv</b><b style="letter-spacing: 0.07px;">ed!</b></span></div><div class="c" style="left:687px;width:51px"><span><b style="letter-spacing: -0.12px;">1</b></span></div><div class="c" style="left:738px;width:51px"><span><b style="letter-spacing: -0.02px;">1.38</b></span></div><div class="c" style="left:789px;width:142px"><span><b style="letter-spacing: -0.3px;">sock</b><b style="letter-spacing: 0.04px;">s5h:</b><b style="letter-spacing: 0.4px;">//s1</b><b style="letter-spacing: 0.05px;">.rep</b><b style="letter-spacing: 0.22px;">roxy</b><b style="letter-spacing: 0.14px;">.net</b><b style="letter-spacing: 0.08px;">work</b><b style="letter-spacing: 0.12px;">:100</b><b style="letter-spacing: -0.12px;">00</b></span></div></div>
<div class="row" style="top:621px"><div class="c" style="left:12px;width:51px"><span><b style="letter-spacing: 0.39px;">#130</b><b style="letter-spacing: -0.12px;">81</b></span></div><div class="c" style="left:63px;width:251px"><span><b style="letter-spacing: 0.3px;">http</b><b style="letter-spacing: 0.63px;">s://</b><b style="letter-spacing: 0px;">marq</b><b style="letter-spacing: 0.23px;">uett</b><b style="letter-spacing: 0.01px;">e.ul</b><b style="letter-spacing: -0.01px;">oop.</b><b style="letter-spacing: 0.16px;">com/</b><b style="letter-spacing: 0.15px;">rent</b><b style="letter-spacing: -0.08px;">ers-</b><b style="letter-spacing: -0.12px;">insu</b><b style="letter-spacing: -0.12px;">ranc</b><b style="letter-spacing: -0.34px;">e</b></span></div><div class="c" style="left:314px;width:51px"><span><b style="letter-spacing: -0.14px;">9.3s</b></span></div><div class="c ok" style="left:365px;width:101px"><span><b style="letter-spacing: 0.39px;">[R] </b><b style="letter-spacing: -0.83px;">OK</b></span></div><div class="c" style="left:466px;width:221px"><span><b style="letter-spacing: -0.78px;">ReCa</b><b style="letter-spacing: 0.04px;">ptch</b><b style="letter-spacing: 0.06px;">a-3 </b><b style="letter-spacing: -0.17px;">solv</b><b style="letter-spacing: 0.07px;">ed!</b></span></div><div class="c" style="left:687px;width:51px"><span><b style="letter-spacing: -0.12px;">1</b></span></div><div class="c" style="left:738px;width:51px"><span><b style="letter-spacing: -0.02px;">1.25</b></span></div><div class="c" style="left:789px;width:142px"><span><b style="letter-spacing: -0.3px;">sock</b><b style="letter-spacing: 0.04px;">s5h:</b><b style="letter-spacing: 0.4px;">//s1</b><b style="letter-spacing: 0.05px;">.rep</b><b style="letter-spacing: 0.22px;">roxy</b><b style="letter-spacing: 0.14px;">.net</b><b style="letter-spacing: 0.08px;">work</b><b style="letter-spacing: 0.12px;">:100</b><b style="letter-spacing: -0.12px;">00</b></span></div></div>
<div class="row" style="top:640px"><div class="c" style="left:12px;width:51px"><span><b style="letter-spacing: 0.39px;">#130</b><b style="letter-spacing: -0.12px;">80</b></span></div><div class="c" style="left:63px;width:251px"><span><b style="letter-spacing: 0.3px;">http</b><b style="letter-spacing: 0.63px;">s://</b><b style="letter-spacing: 0.38px;">www.</b><b style="letter-spacing: -0.23px;">420s</b><b style="letter-spacing: -0.16px;">a.co</b><b style="letter-spacing: 0.11px;">.za/</b><b style="letter-spacing: 0px;">regi</b><b style="letter-spacing: 0px;">ster</b><b style="letter-spacing: 1.14px;">/</b></span></div><div class="c" style="left:314px;width:51px"><span><b style="letter-spacing: -0.14px;">2.4s</b></span></div><div class="c bad" style="left:365px;width:101px"><span style="letter-spacing:-0.46px">[R] BAD SITEKEY!</span></div><div class="c" style="left:466px;width:221px"><span><b style="letter-spacing: -0.78px;">ReCa</b><b style="letter-spacing: 0.04px;">ptch</b><b style="letter-spacing: 0.06px;">a-3 </b><b style="letter-spacing: -0.12px;">inco</b><b style="letter-spacing: -0.04px;">rrec</b><b style="letter-spacing: 0.15px;">t pa</b><b style="letter-spacing: -0.08px;">rame</b><b style="letter-spacing: 0px;">ters</b></span></div><div class="c" style="left:687px;width:51px"><span><b style="letter-spacing: -0.12px;">0</b></span></div><div class="c" style="left:738px;width:51px"><span><b style="letter-spacing: -0.02px;">0.13</b></span></div><div class="c" style="left:789px;width:142px"><span><b style="letter-spacing: -0.3px;">sock</b><b style="letter-spacing: 0.04px;">s5h:</b><b style="letter-spacing: 0.4px;">//s1</b><b style="letter-spacing: 0.05px;">.rep</b><b style="letter-spacing: 0.22px;">roxy</b><b style="letter-spacing: 0.14px;">.net</b><b style="letter-spacing: 0.08px;">work</b><b style="letter-spacing: 0.12px;">:100</b><b style="letter-spacing: -0.12px;">00</b></span></div></div>
<div class="row" style="top:659px"><div class="c" style="left:12px;width:51px"><span><b style="letter-spacing: 0.39px;">#130</b><b style="letter-spacing: -0.12px;">79</b></span></div><div class="c" style="left:63px;width:251px"><span><b style="letter-spacing: 0.3px;">http</b><b style="letter-spacing: 0.63px;">s://</b><b style="letter-spacing: 0.13px;">detr</b><b style="letter-spacing: 0.22px;">oit-</b><b style="letter-spacing: 0.11px;">mi.u</b><b style="letter-spacing: -0.06px;">loop</b><b style="letter-spacing: -0.06px;">.com</b><b style="letter-spacing: 0.26px;">/hou</b><b style="letter-spacing: -0.14px;">sing</b></span></div><div class="c" style="left:314px;width:51px"><span><b style="letter-spacing: -0.14px;">9.0s</b></span></div><div class="c ok" style="left:365px;width:101px"><span><b style="letter-spacing: 0.39px;">[R] </b><b style="letter-spacing: -0.83px;">OK</b></span></div><div class="c" style="left:466px;width:221px"><span><b style="letter-spacing: -0.78px;">ReCa</b><b style="letter-spacing: 0.04px;">ptch</b><b style="letter-spacing: 0.06px;">a-3 </b><b style="letter-spacing: -0.17px;">solv</b><b style="letter-spacing: 0.07px;">ed!</b></span></div><div class="c" style="left:687px;width:51px"><span><b style="letter-spacing: -0.12px;">1</b></span></div><div class="c" style="left:738px;width:51px"><span><b style="letter-spacing: -0.02px;">1.20</b></span></div><div class="c" style="left:789px;width:142px"><span><b style="letter-spacing: -0.3px;">sock</b><b style="letter-spacing: 0.04px;">s5h:</b><b style="letter-spacing: 0.4px;">//s1</b><b style="letter-spacing: 0.05px;">.rep</b><b style="letter-spacing: 0.22px;">roxy</b><b style="letter-spacing: 0.14px;">.net</b><b style="letter-spacing: 0.08px;">work</b><b style="letter-spacing: 0.12px;">:100</b><b style="letter-spacing: -0.12px;">00</b></span></div></div>


<!-- vertical scrollbar -->
<div class="abs" style="left:930px;top:203px;width:15px;height:471px;background:linear-gradient(90deg,#a9bfd5,#b6cade 40%,#b2c7db)"></div>
<div class="sbtn" style="left:931px;top:204px;width:16px;height:16px"></div>
<svg class="abs" style="left:931px;top:204px" width="14" height="16"><path d="M4.5 9.5 L8 6 L11.5 9.5 Z" fill="#3a6a9c"></path></svg>
<div class="sbtn" style="left:931px;top:221px;width:16px;height:16px"></div>
<svg class="abs" style="left:931px;top:221px" width="14" height="16"><path d="M5 6.5h6M5 9.5h6" stroke="#8fabc6" stroke-width="1"></path><path d="M5 7.5h6M5 10.5h6" stroke="#fff" stroke-width="1"></path></svg>
<div class="sbtn" style="left:931px;top:658px;width:16px;height:16px"></div>
<svg class="abs" style="left:931px;top:658px" width="14" height="16"><path d="M4.5 6 L8 9.5 L11.5 6 Z" fill="#3a6a9c"></path></svg>
<!-- horizontal scrollbar -->
<div class="abs" style="left:11px;top:674px;width:919px;height:18px;background:linear-gradient(#a9bfd5,#b6cade 40%,#b2c7db 90%,#a9c0d6 94%,#a9c0d6)"></div>
<div class="sbtn" style="left:12px;top:675px;width:16px;height:16px"></div>
<svg class="abs" style="left:12px;top:675px" width="16" height="15"><path d="M9.5 4 L6 7.5 L9.5 11 Z" fill="#3a6a9c"></path></svg>
<div class="sbtn" style="left:30px;top:675px;width:16px;height:16px"></div>
<svg class="abs" style="left:30px;top:675px" width="16" height="15"><path d="M6.5 5v5M9.5 5v5" stroke="#8fabc6" stroke-width="1"></path><path d="M7.5 5v5M10.5 5v5" stroke="#fff" stroke-width="1"></path></svg>
<div class="sbtn" style="left:914px;top:675px;width:16px;height:16px"></div>
<svg class="abs" style="left:914px;top:675px" width="16" height="15"><path d="M6.5 4 L10 7.5 L6.5 11 Z" fill="#3a6a9c"></path></svg>
<div class="abs" style="left:930px;top:674px;width:15px;height:18px;background:#dde6ef"></div>
<!-- status bar -->
<div class="abs" style="left:10px;top:692px;width:940px;height:20px;background:linear-gradient(#fafcfd 0,#fafcfd 1px,#eef3f8 1px,#e6edf4 60%,#dfe7f0 95%,#f4f7fa 95%)"></div><div class="abs" style="left:0;top:712px;width:945px;height:1px;background:#1c3c6c"></div><div class="abs" style="left:759px;top:694px;width:1px;height:17px;background:#c8d6e4"></div><div class="abs" style="left:850px;top:694px;width:1px;height:17px;background:#c8d6e4"></div><div class="abs" style="left:932px;top:694px;width:1px;height:17px;background:#c8d6e4"></div><svg class="abs" style="left:933px;top:697px" width="12" height="13"><path d="M12 2 L12 11 L3 11 Z" fill="#3d6a9a"></path></svg>
<div class="abs" style="left:11px;top:698px;width:748px;height:14px;overflow:hidden"><div class="t" style="left:0;top:0;font-size:12px"><b style="letter-spacing: -0.4px;">Rand</b><b style="letter-spacing: 0.07px;">om p</b><b style="letter-spacing: 0.02px;">roxy</b><b style="letter-spacing: 0.26px;"> fro</b><b style="letter-spacing: 0.27px;">m "h</b><b style="letter-spacing: 0.17px;">ttps</b><b style="letter-spacing: 0.93px;">://r</b><b style="letter-spacing: -0.06px;">epro</b><b style="letter-spacing: 0.28px;">xy.n</b><b style="letter-spacing: 0.1px;">etwo</b><b style="letter-spacing: 0.38px;">rk/p</b><b style="letter-spacing: 0.05px;">roxi</b><b style="letter-spacing: 0.05px;">es/p</b><b style="letter-spacing: 0.05px;">roxi</b><b style="letter-spacing: -0.19px;">es.p</b><b style="letter-spacing: -0.35px;">hp?a</b><b style="letter-spacing: 0.61px;">uth=</b><b style="letter-spacing: 0.17px;">ipty</b><b style="letter-spacing: 0.35px;">pe=i</b><b style="letter-spacing: -0.17px;">pv6c</b><b style="letter-spacing: 0.14px;">ount</b><b style="letter-spacing: 0.17px;">ry=G</b><b style="letter-spacing: -0.47px;">BRpr</b><b style="letter-spacing: -0.03px;">otoc</b><b style="letter-spacing: 0.25px;">ol=s</b><b style="letter-spacing: -0.33px;">ocks</b><b style="letter-spacing: 0.56px;">": *</b><b style="letter-spacing: 0.37px;">****</b><b style="letter-spacing: 0.52px;">5h:/</b><b style="letter-spacing: 0.2px;">/s1.</b><b style="letter-spacing: 0.06px;">repr</b><b style="letter-spacing: 0.03px;">oxy*</b><b style="letter-spacing: 0.23px;">*etw</b><b style="letter-spacing: 0.05px;">ork</b></div></div><div class="t" style="left:763px;top:698px;font-size:11px"><b style="letter-spacing: -0.11px;">OK; </b><b style="letter-spacing: -0.12px;">6794</b><b style="letter-spacing: 0.2px;">6/67</b><b style="letter-spacing: -0.11px;">951</b></div><div class="abs" style="left:853px;top:698px;width:79px;height:14px;overflow:hidden"><div class="t" style="left:0;top:0;font-size:11px"><b style="letter-spacing: -0.52px;">HC12</b><b style="letter-spacing: 0.25px;">1;0 </b><b style="letter-spacing: -0.12px;">1000</b><b style="letter-spacing: 0.13px;"> 0</b></div></div>

</body></html>
